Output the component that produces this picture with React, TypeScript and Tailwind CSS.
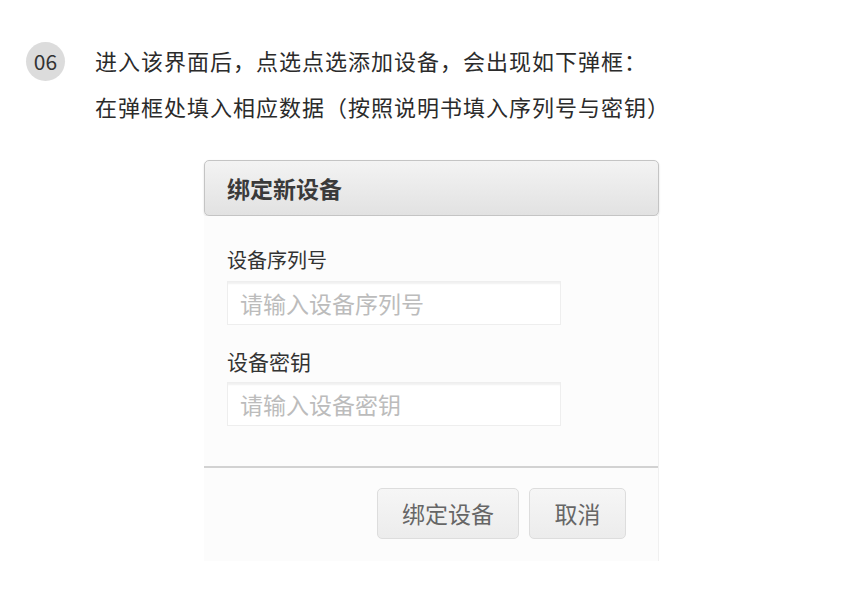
export default function App() {
  const font = { fontFamily: '"Noto Sans CJK SC", "Noto Sans", sans-serif' };
  return (
    <div className="w-[860px] h-[608px] bg-white text-[#333]" style={font}>
      <div className="pt-[42px] pl-[26px] flex gap-[30px]">
        <div className="w-[39px] h-[39px] rounded-full bg-[#dcdcdc] flex items-center justify-center text-[21px] text-[#333] shrink-0">
          06
        </div>
        <div className="flex flex-col gap-[22px] text-[22px] leading-[24px] pt-[6px] text-[#2b2b2b] tracking-[1px]">
          <p>进入该界面后，点选点选添加设备，会出现如下弹框：</p>
          <p>在弹框处填入相应数据（按照说明书填入序列号与密钥）</p>
        </div>
      </div>

      <div className="ml-[204px] mt-[42px] w-[455px]">
        <div className="h-[56px] rounded-[5px] border border-[#c4c4c4] bg-gradient-to-b from-[#f3f3f3] to-[#e2e2e2] shadow-[0_1px_2px_rgba(0,0,0,0.15)] flex items-center pl-[22px]">
          <span className="text-[23px] font-bold text-[#3a3a3a]">绑定新设备</span>
        </div>
        <div className="bg-[#fcfcfc] border-r border-[#f0f0f0]">
          <div className="pl-[23px] pt-[32px] pb-[40px]">
            <div className="text-[20px] leading-[24px] text-[#333]">设备序列号</div>
            <div className="mt-[9px] w-[334px] h-[44px] bg-white border border-[#eeeeee] shadow-[inset_0_3px_2px_-1px_rgba(0,0,0,0.06)] flex items-center pl-[12px] text-[23px] text-[#bcbcbc]">
              请输入设备序列号
            </div>
            <div className="mt-[24px] text-[21px] leading-[24px] text-[#333]">设备密钥</div>
            <div className="mt-[9px] w-[334px] h-[44px] bg-white border border-[#eeeeee] shadow-[inset_0_3px_2px_-1px_rgba(0,0,0,0.06)] flex items-center pl-[12px] text-[23px] text-[#bcbcbc]">
              请输入设备密钥
            </div>
          </div>
          <div className="h-[2px] bg-[#d2d2d2]" />
          <div className="flex justify-end gap-[10px] pr-[32px] pt-[20px] pb-[22px]">
            <div className="w-[142px] h-[51px] rounded-[5px] border border-[#dddddd] bg-gradient-to-b from-[#f6f6f6] to-[#ececec] flex items-center justify-center text-[23px] text-[#666]">
              绑定设备
            </div>
            <div className="w-[97px] h-[51px] rounded-[5px] border border-[#dddddd] bg-gradient-to-b from-[#f6f6f6] to-[#ececec] flex items-center justify-center text-[23px] text-[#666]">
              取消
            </div>
          </div>
        </div>
      </div>
    </div>
  );
}
